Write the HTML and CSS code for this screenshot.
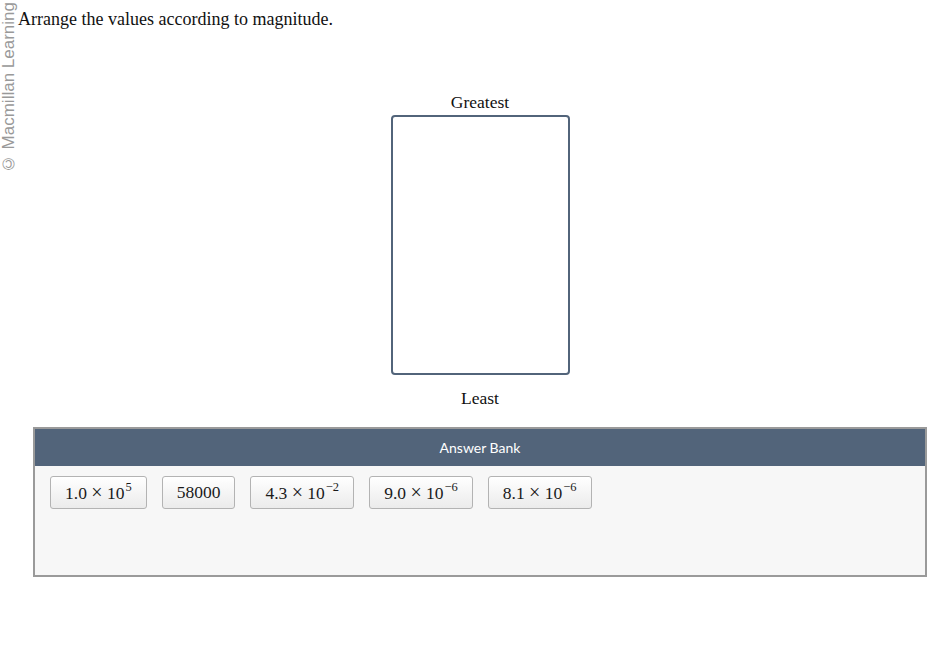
FILE: index.html
```html
<!DOCTYPE html>
<html>
<head>
<meta charset="utf-8">
<link rel="stylesheet" href="styles.css">
</head>
<body>
<div class="watermark">© Macmillan Learning</div>
<div class="title">Arrange the values according to magnitude.</div>
<div class="sorter">
  <div class="label label-top">Greatest</div>
  <div class="dropbox"></div>
  <div class="label label-bottom">Least</div>
</div>
<div class="bank">
  <div class="bank-header">Answer Bank</div>
  <div class="bank-body">
    <div class="token">1.0 <span class="times">×</span> 10<sup>5</sup></div>
    <div class="token">58000</div>
    <div class="token">4.3 <span class="times">×</span> 10<sup>−2</sup></div>
    <div class="token">9.0 <span class="times">×</span> 10<sup>−6</sup></div>
    <div class="token">8.1 <span class="times">×</span> 10<sup>−6</sup></div>
  </div>
</div>
</body>
</html>
```
FILE: styles.css
```css
html, body {
  margin: 0;
  padding: 0;
  background: #ffffff;
}
body {
  font-family: "Liberation Serif", "Times New Roman", serif;
  color: #111;
  width: 936px;
  height: 646px;
  position: relative;
}
.watermark {
  position: absolute;
  left: 0px;
  top: 2px;
  writing-mode: vertical-rl;
  transform: rotate(180deg);
  font-family: "Liberation Sans", Arial, sans-serif;
  font-size: 17px;
  line-height: 17px;
  color: #999999;
  white-space: nowrap;
}
.title {
  padding: 9px 0 0 18px;
  font-size: 18px;
  line-height: 21px;
}
.sorter {
  margin-left: 33px;
  width: 894px;
  display: flex;
  flex-direction: column;
  align-items: center;
}
.label {
  font-size: 17.5px;
  line-height: 20px;
}
.label-top {
  margin-top: 62px;
  margin-bottom: 3px;
}
.dropbox {
  width: 179px;
  height: 260px;
  box-sizing: border-box;
  border: 2px solid #52647a;
  border-radius: 4px;
  background: #fff;
}
.label-bottom {
  margin-top: 13px;
}
.bank {
  margin: 19px 0 0 33px;
  width: 894px;
  box-sizing: border-box;
  border: 2px solid #9a9a9a;
  background: #f7f7f7;
}
.bank-header {
  height: 37px;
  background: #52647a;
  color: #fff;
  font-family: Lato, "Open Sans", sans-serif;
  font-size: 14px;
  line-height: 37px;
  text-align: center;
}
.bank-body {
  height: 109px;
  box-sizing: border-box;
  padding: 10px 15px;
  display: flex;
  align-items: flex-start;
  gap: 15px;
}
.token {
  height: 33px;
  box-sizing: border-box;
  padding: 0 14px;
  border: 1px solid #b3b3b3;
  border-radius: 3px;
  background: linear-gradient(#ffffff, #ebebeb);
  font-size: 17.5px;
  line-height: 31px;
  color: #1a1a1a;
  white-space: nowrap;
}
.token .times {
  font-size: 20px;
}
.token sup {
  font-size: 12.5px;
  line-height: 0;
  vertical-align: 8px;
  margin-left: 1px;
}
```
